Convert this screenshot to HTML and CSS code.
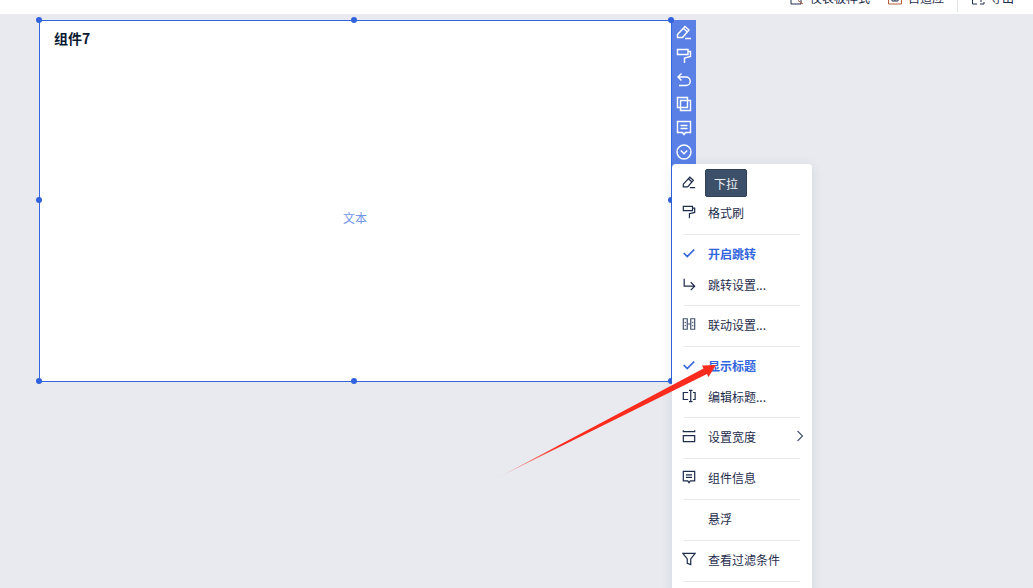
FILE: index.html
```html
<!DOCTYPE html>
<html lang="zh-CN">
<head>
    <meta charset="UTF-8">
    <meta name="viewport" content="width=device-width, initial-scale=1.0">
    <title>组件7</title>
    <link rel="stylesheet" href="styles.css">
</head>
<body>
<div class="topbar">
    <div class="top-item">
        <svg class="top-icon" viewBox="0 0 14 14"><path d="M1 1h10v12H1z" stroke="#1f2d4d"/><path d="M8 9.500l5 3.500" stroke="#c2552d"/></svg>
        仪表板样式
    </div>
    <div class="top-item">
        <svg class="top-icon" viewBox="0 0 14 14"><path d="M.5 1h13v12H.5z" stroke="#b9603a"/><path d="M4 5h6v5H4zM7 5v5" stroke="#1f2d4d"/></svg>
        自适应
    </div>
    <div class="top-sep"></div>
    <div class="top-item">
        <svg class="top-icon" viewBox="0 0 14 14"><path d="M1.500 1v12H6M12.500 7v2M9 13h4v-2M10 9v2" stroke="#1f2d4d"/></svg>
        导出
    </div>
</div>

<div class="canvas">
    <div class="widget">
        <div class="card">
            <div class="card-title">组件7</div>
            <div class="card-body">文本</div>
            <span class="handle h-tl"></span>
            <span class="handle h-tc"></span>
            <span class="handle h-tr"></span>
            <span class="handle h-ml"></span>
            <span class="handle h-mr"></span>
            <span class="handle h-bl"></span>
            <span class="handle h-bc"></span>
            <span class="handle h-br"></span>
        </div>
        <div class="toolbar">
            <svg class="tool" viewBox="0 0 16 16"><path d="M1.500 10.500L9 2.500l4 3.500-6.500 7.500h-5zM7.500 4.500l4 3.500M9 14.500h6"/></svg>
            <svg class="tool" viewBox="0 0 16 16"><path d="M1.500 1.500h10.500v5H1.500zM12 3.500h2.500v5l-6 1.500v5"/></svg>
            <svg class="tool" viewBox="0 0 16 16"><path d="M5.500 1.500L2 5l3.500 3.500M2 5h8a4 4 0 0 1 0 8.500H3"/></svg>
            <svg class="tool" viewBox="0 0 16 16"><path d="M1.500 1.500h10v10h-10zM4.500 4.500h10v10h-10z"/></svg>
            <svg class="tool" viewBox="0 0 16 16"><path d="M1.500 1.500h13v11H9.500L8 14.500l-1.500-2h-5zM4.500 5.500h7M4.500 8.500h7"/></svg>
            <svg class="tool" viewBox="0 0 16 16"><circle cx="8" cy="8" r="7"/><path d="M4.800 6.500L8 9.800l3.200-3.300"/></svg>
        </div>
    </div>

    <div class="menu">
        <div class="menu-group">
            <div class="menu-item">
                <svg class="menu-icon" viewBox="0 0 16 16"><path d="M1.500 10.500L9 2.500l4 3.500-6.500 7.500h-5zM7.500 4.500l4 3.500M9 14.500h6"/></svg>
            </div>
            <div class="menu-item">
                <svg class="menu-icon" viewBox="0 0 16 16"><path d="M1.500 1.500h10.500v5H1.500zM12 3.500h2.500v5l-6 1.500v5"/></svg>
                格式刷
            </div>
        </div>
        <div class="menu-group double">
            <div class="menu-item active">
                <svg class="menu-icon" viewBox="0 0 16 16"><path d="M2 8l4 4 8-8"/></svg>
                开启跳转
            </div>
            <div class="menu-item">
                <svg class="menu-icon" viewBox="0 0 16 16"><path d="M2.500 2v8.500h11.500M10 6l4.500 4.500-4.500 4.500"/></svg>
                跳转设置...
            </div>
        </div>
        <div class="menu-group">
            <div class="menu-item">
                <svg class="menu-icon link-icon" viewBox="0 0 16 16"><path d="M1.500 2h4.500v12H1.500zM10 2h4.500v12H10zM6 8h4M3.700 5.500v1.500M3.700 9v1.500M12.300 5.500v1.500M12.300 9v1.500"/></svg>
                联动设置...
            </div>
        </div>
        <div class="menu-group double">
            <div class="menu-item active">
                <svg class="menu-icon" viewBox="0 0 16 16"><path d="M2 8l4 4 8-8"/></svg>
                显示标题
            </div>
            <div class="menu-item">
                <svg class="menu-icon" viewBox="0 0 16 16"><path d="M7 4H1.500v8H7M12.500 4H15v8h-2.500M10 1.500v13M8 1.500h4M8 14.500h4"/></svg>
                编辑标题...
            </div>
        </div>
        <div class="menu-group">
            <div class="menu-item">
                <svg class="menu-icon" viewBox="0 0 16 16"><path d="M1.500 1.500v1.500h13V1.500M1.500 14.500V7.500h13v7M1 14.500h14"/></svg>
                设置宽度
                <svg class="menu-arrow" viewBox="0 0 8 12"><path d="M1.500 1l5 5-5 5"/></svg>
            </div>
        </div>
        <div class="menu-group">
            <div class="menu-item">
                <svg class="menu-icon" viewBox="0 0 16 16"><path d="M1.500 1.500h13v11H9.500L8 14.500l-1.500-2h-5zM4.500 5.500h7M4.500 8.500h7"/></svg>
                组件信息
            </div>
        </div>
        <div class="menu-group">
            <div class="menu-item"><span class="menu-icon"></span>悬浮</div>
        </div>
        <div class="menu-group">
            <div class="menu-item">
                <svg class="menu-icon" viewBox="0 0 16 16"><path d="M1 1.500h14L10 8v6.500l-4-1.500V8z"/></svg>
                查看过滤条件
            </div>
        </div>
        <div class="menu-group"></div>
    </div>

    <div class="tooltip">下拉</div>
</div>

<svg class="arrow" viewBox="0 0 1033 588">
    <defs>
        <linearGradient id="fade" gradientUnits="userSpaceOnUse" x1="499" y1="477" x2="560" y2="445">
            <stop offset="0" stop-color="#fb2b1d" stop-opacity="0.25"/>
            <stop offset="1" stop-color="#fb2b1d"/>
        </linearGradient>
    </defs>
    <path d="M498 477.500L703.500 368.500 702 365.500 716 365 708.500 377 707 374z" fill="url(#fade)"/>
</svg>
</body>
</html>
```

FILE: styles.css
```css
html,body{height:100%;}
body{
    margin:0;background:#e8eaef;color:#1f2d4d;
    font-family:"Noto Sans CJK SC","Noto Sans",sans-serif;font-size:12px;
    overflow:hidden;position:relative;
}
.topbar{
    height:14px;background:#fff;overflow:hidden;
    display:flex;justify-content:flex-end;align-items:flex-end;
    padding-right:19px;box-sizing:border-box;
}
.top-item{
    display:flex;align-items:center;gap:6px;line-height:14px;margin-left:18px;
    height:14px;transform:translateY(-9px);flex-shrink:0;
}
.top-icon{width:14px;height:14px;fill:none;}
.top-sep{width:1px;height:12px;background:#e3e5ea;margin-left:13px;align-self:flex-start;}
.top-sep + .top-item{margin-left:13px;gap:5px;}

.canvas{padding:6px 0 0 39px;position:relative;}
.widget{display:flex;align-items:flex-start;}
.card{
    width:631px;height:360px;background:#fff;border:1px solid #3366dd;
    position:relative;display:flex;flex-direction:column;
}
.card-title{padding:8px 14px 0;font-size:14px;font-weight:700;color:#0b1a33;line-height:18px;height:29px;}
.card-body{flex:1;display:flex;align-items:center;justify-content:center;color:#7195ea;padding:0 1px 5px 0;}
.handle{
    position:absolute;width:6px;height:6px;border-radius:50%;background:#2f62dc;
}
.h-tl{left:-4px;top:-4px;}
.h-tc{left:311px;top:-4px;}
.h-tr{right:-3px;top:-4px;}
.h-ml{left:-4px;top:176px;}
.h-mr{right:-3px;top:176px;}
.h-bl{left:-4px;bottom:-3px;}
.h-bc{left:311px;bottom:-3px;}
.h-br{right:-3px;bottom:-3px;}

.toolbar{
    width:24px;height:148px;background:#5a80e6;flex-shrink:0;
    display:flex;flex-direction:column;align-items:center;
}
.tool{
    width:16px;height:16px;margin:4px 0;flex-shrink:0;
    fill:none;stroke:#fff;stroke-width:1.4;
}

.menu{
    position:absolute;left:672px;top:150px;width:140px;height:440px;
    background:#fff;border-radius:4px;box-shadow:0 2px 12px rgba(30,50,90,.1);
    overflow:hidden;
}
.menu-group{margin:0 12px;padding:4px 0 6px;border-bottom:1px solid #e6e8ee;}
.menu-group.double{display:flex;flex-direction:column;gap:1px;padding-bottom:5px;}
.menu-group:last-child{border-bottom:none;}
.menu-item{height:30px;box-sizing:border-box;padding-bottom:2px;display:flex;align-items:center;position:relative;}
.menu-icon{
    width:14px;height:14px;margin:0 12px 0 -2px;flex-shrink:0;
    fill:none;stroke:#1f2d4d;stroke-width:1.4;
}
.link-icon{stroke:#47556f;}
.menu-arrow{
    position:absolute;right:-4px;top:8px;width:8px;height:12px;
    fill:none;stroke:#4a5872;stroke-width:1.2;
}
.menu-item.active{color:#3366dd;font-weight:700;}
.menu-item.active .menu-icon{stroke:#3366dd;stroke-width:2;}

.tooltip{
    position:absolute;left:705px;top:155px;width:42px;height:28px;box-sizing:border-box;
    background:#3d5069;border:1px solid #2f3f56;border-radius:2px;color:#f0f2f5;
    display:flex;align-items:center;justify-content:center;
}
.arrow{position:absolute;left:0;top:0;width:1033px;height:588px;pointer-events:none;}
```
